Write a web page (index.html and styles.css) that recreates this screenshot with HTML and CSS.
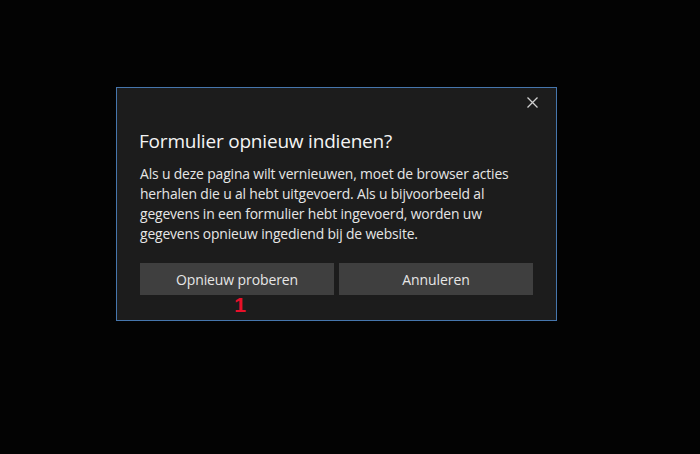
FILE: index.html
```html
<!DOCTYPE html>
<html lang="nl">
<head>
<meta charset="utf-8">
<title>Formulier opnieuw indienen?</title>
<link rel="stylesheet" href="styles.css">
</head>
<body>
<div class="stage">
  <div class="dialog">
    <div class="top">
      <button class="close" aria-label="Sluiten">
        <svg width="11" height="11" viewBox="0 0 11 11"><path d="M0.5 0.5 L10.5 10.5 M10.5 0.5 L0.5 10.5" stroke="#d0d0d0" stroke-width="1.3" fill="none"/></svg>
      </button>
    </div>
    <h1 class="title">Formulier opnieuw indienen?</h1>
    <p class="text">Als u deze pagina wilt vernieuwen, moet de browser acties herhalen die u al hebt uitgevoerd. Als u bijvoorbeeld al gegevens in een formulier hebt ingevoerd, worden uw gegevens opnieuw ingediend bij de website.</p>
    <div class="actions">
      <div class="action">
        <button class="btn">Opnieuw proberen</button>
        <span class="marker">1</span>
      </div>
      <div class="action">
        <button class="btn">Annuleren</button>
      </div>
    </div>
  </div>
</div>
</body>
</html>
```

FILE: styles.css
```css
html, body {
  margin: 0;
  padding: 0;
  background: #030303;
  width: 700px;
  height: 454px;
  overflow: hidden;
}
.stage {
  padding: 87px 0 0 116px;
}
.dialog {
  box-sizing: border-box;
  width: 441px;
  height: 234px;
  border: 1px solid #4676ad;
  background: #1c1c1c;
  padding: 0 23px 0 23px;
  font-family: "Open Sans", "Noto Sans", sans-serif;
  color: #e8e8e8;
}
.top {
  display: flex;
  justify-content: flex-end;
  height: 24px;
  padding-top: 9px;
  margin-right: -5px;
}
.close {
  background: none;
  border: none;
  padding: 0;
  width: 11px;
  height: 11px;
  display: flex;
}
.title {
  margin: 6px 0 0 -1px;
  font-weight: 400;
  font-size: 19px;
  line-height: 28px;
  color: #f4f4f4;
  letter-spacing: -0.2px;
}
.text {
  margin: 9px 0 0 0;
  font-size: 13.9px;
  line-height: 20px;
  color: #e6e6e6;
  letter-spacing: -0.15px;
  width: 385px;
}
.actions {
  display: flex;
  gap: 5px;
  margin-top: 19px;
}
.action {
  flex: 1;
  display: flex;
  flex-direction: column;
  align-items: center;
}
.btn {
  width: 100%;
  height: 32px;
  border: none;
  background: #3f3f3f;
  color: #e6e6e6;
  font-family: "Open Sans", "Noto Sans", sans-serif;
  font-size: 14px;
  padding: 0;
  letter-spacing: -0.1px;
}
.marker {
  color: #e8102a;
  font-family: "Liberation Sans", Arial, sans-serif;
  font-weight: 700;
  font-size: 21px;
  line-height: 20px;
  margin-top: 0;
  margin-left: 6px;
}
```
